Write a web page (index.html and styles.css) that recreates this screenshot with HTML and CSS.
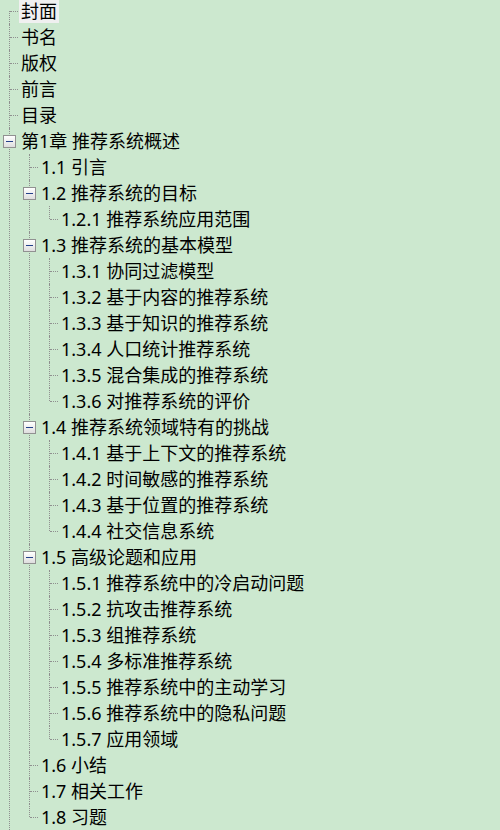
FILE: index.html
```html
<!DOCTYPE html>
<html lang="zh-CN">
<head>
<meta charset="utf-8">
<title>目录</title>
<link rel="stylesheet" href="styles.css">
</head>
<body>
<ul class="tree">
  <li><div class="row"><span class="label selected">封面</span></div></li>
  <li><div class="row"><span class="label">书名</span></div></li>
  <li><div class="row"><span class="label">版权</span></div></li>
  <li><div class="row"><span class="label">前言</span></div></li>
  <li><div class="row"><span class="label">目录</span></div></li>
  <li><div class="row open"><span class="toggle"></span><span class="label">第1章 推荐系统概述</span></div>
    <ul>
      <li><div class="row"><span class="label">1.1 引言</span></div></li>
      <li><div class="row open"><span class="toggle"></span><span class="label">1.2 推荐系统的目标</span></div>
        <ul>
          <li><div class="row"><span class="label">1.2.1 推荐系统应用范围</span></div></li>
        </ul>
      </li>
      <li><div class="row open"><span class="toggle"></span><span class="label">1.3 推荐系统的基本模型</span></div>
        <ul>
          <li><div class="row"><span class="label">1.3.1 协同过滤模型</span></div></li>
          <li><div class="row"><span class="label">1.3.2 基于内容的推荐系统</span></div></li>
          <li><div class="row"><span class="label">1.3.3 基于知识的推荐系统</span></div></li>
          <li><div class="row"><span class="label">1.3.4 人口统计推荐系统</span></div></li>
          <li><div class="row"><span class="label">1.3.5 混合集成的推荐系统</span></div></li>
          <li><div class="row"><span class="label">1.3.6 对推荐系统的评价</span></div></li>
        </ul>
      </li>
      <li><div class="row open"><span class="toggle"></span><span class="label">1.4 推荐系统领域特有的挑战</span></div>
        <ul>
          <li><div class="row"><span class="label">1.4.1 基于上下文的推荐系统</span></div></li>
          <li><div class="row"><span class="label">1.4.2 时间敏感的推荐系统</span></div></li>
          <li><div class="row"><span class="label">1.4.3 基于位置的推荐系统</span></div></li>
          <li><div class="row"><span class="label">1.4.4 社交信息系统</span></div></li>
        </ul>
      </li>
      <li><div class="row open"><span class="toggle"></span><span class="label">1.5 高级论题和应用</span></div>
        <ul>
          <li><div class="row"><span class="label">1.5.1 推荐系统中的冷启动问题</span></div></li>
          <li><div class="row"><span class="label">1.5.2 抗攻击推荐系统</span></div></li>
          <li><div class="row"><span class="label">1.5.3 组推荐系统</span></div></li>
          <li><div class="row"><span class="label">1.5.4 多标准推荐系统</span></div></li>
          <li><div class="row"><span class="label">1.5.5 推荐系统中的主动学习</span></div></li>
          <li><div class="row"><span class="label">1.5.6 推荐系统中的隐私问题</span></div></li>
          <li><div class="row"><span class="label">1.5.7 应用领域</span></div></li>
        </ul>
      </li>
      <li><div class="row"><span class="label">1.6 小结</span></div></li>
      <li><div class="row"><span class="label">1.7 相关工作</span></div></li>
      <li><div class="row"><span class="label">1.8 习题</span></div></li>
    </ul>
  </li>
</ul>
</body>
</html>
```

FILE: styles.css
```css
html, body {
  margin: 0;
  padding: 0;
  background: #cce8cf;
}

body {
  font-family: "Noto Sans", "Noto Sans CJK SC", sans-serif;
  font-size: 18px;
  color: #000;
  height: 830px;
  overflow: hidden;
}

.tree {
  list-style: none;
  margin: -2px 0 0 0;
  padding: 0;
}

.tree ul {
  list-style: none;
  margin: 0 0 0 20px;
  padding: 0;
}

.tree li {
  position: relative;
}

.tree li::before {
  content: "";
  position: absolute;
  left: 9px;
  top: 0;
  bottom: 0;
  border-left: 1px dotted #8f8f8f;
}

.tree > li:first-child::before {
  top: 13px;
}

.tree ul > li:last-child::before {
  bottom: auto;
  height: 13px;
}

.row {
  position: relative;
  height: 26px;
  display: flex;
  align-items: center;
  padding-left: 19px;
}

.row::before {
  content: "";
  position: absolute;
  left: 10px;
  top: 13px;
  width: 8px;
  border-top: 1px dotted #8f8f8f;
}

.row.open::before {
  display: none;
}

.label {
  height: 24px;
  line-height: 24px;
  padding: 0 2px;
  white-space: nowrap;
}

.selected {
  background: #f0f0f0;
}

.toggle {
  position: absolute;
  left: 3px;
  top: 7px;
  width: 11px;
  height: 11px;
  border: 1px solid #919191;
  background: linear-gradient(#ffffff, #dedede);
}

.toggle::after {
  content: "";
  position: absolute;
  left: 2px;
  right: 2px;
  top: 5px;
  height: 1px;
  background: #23418a;
}
```
